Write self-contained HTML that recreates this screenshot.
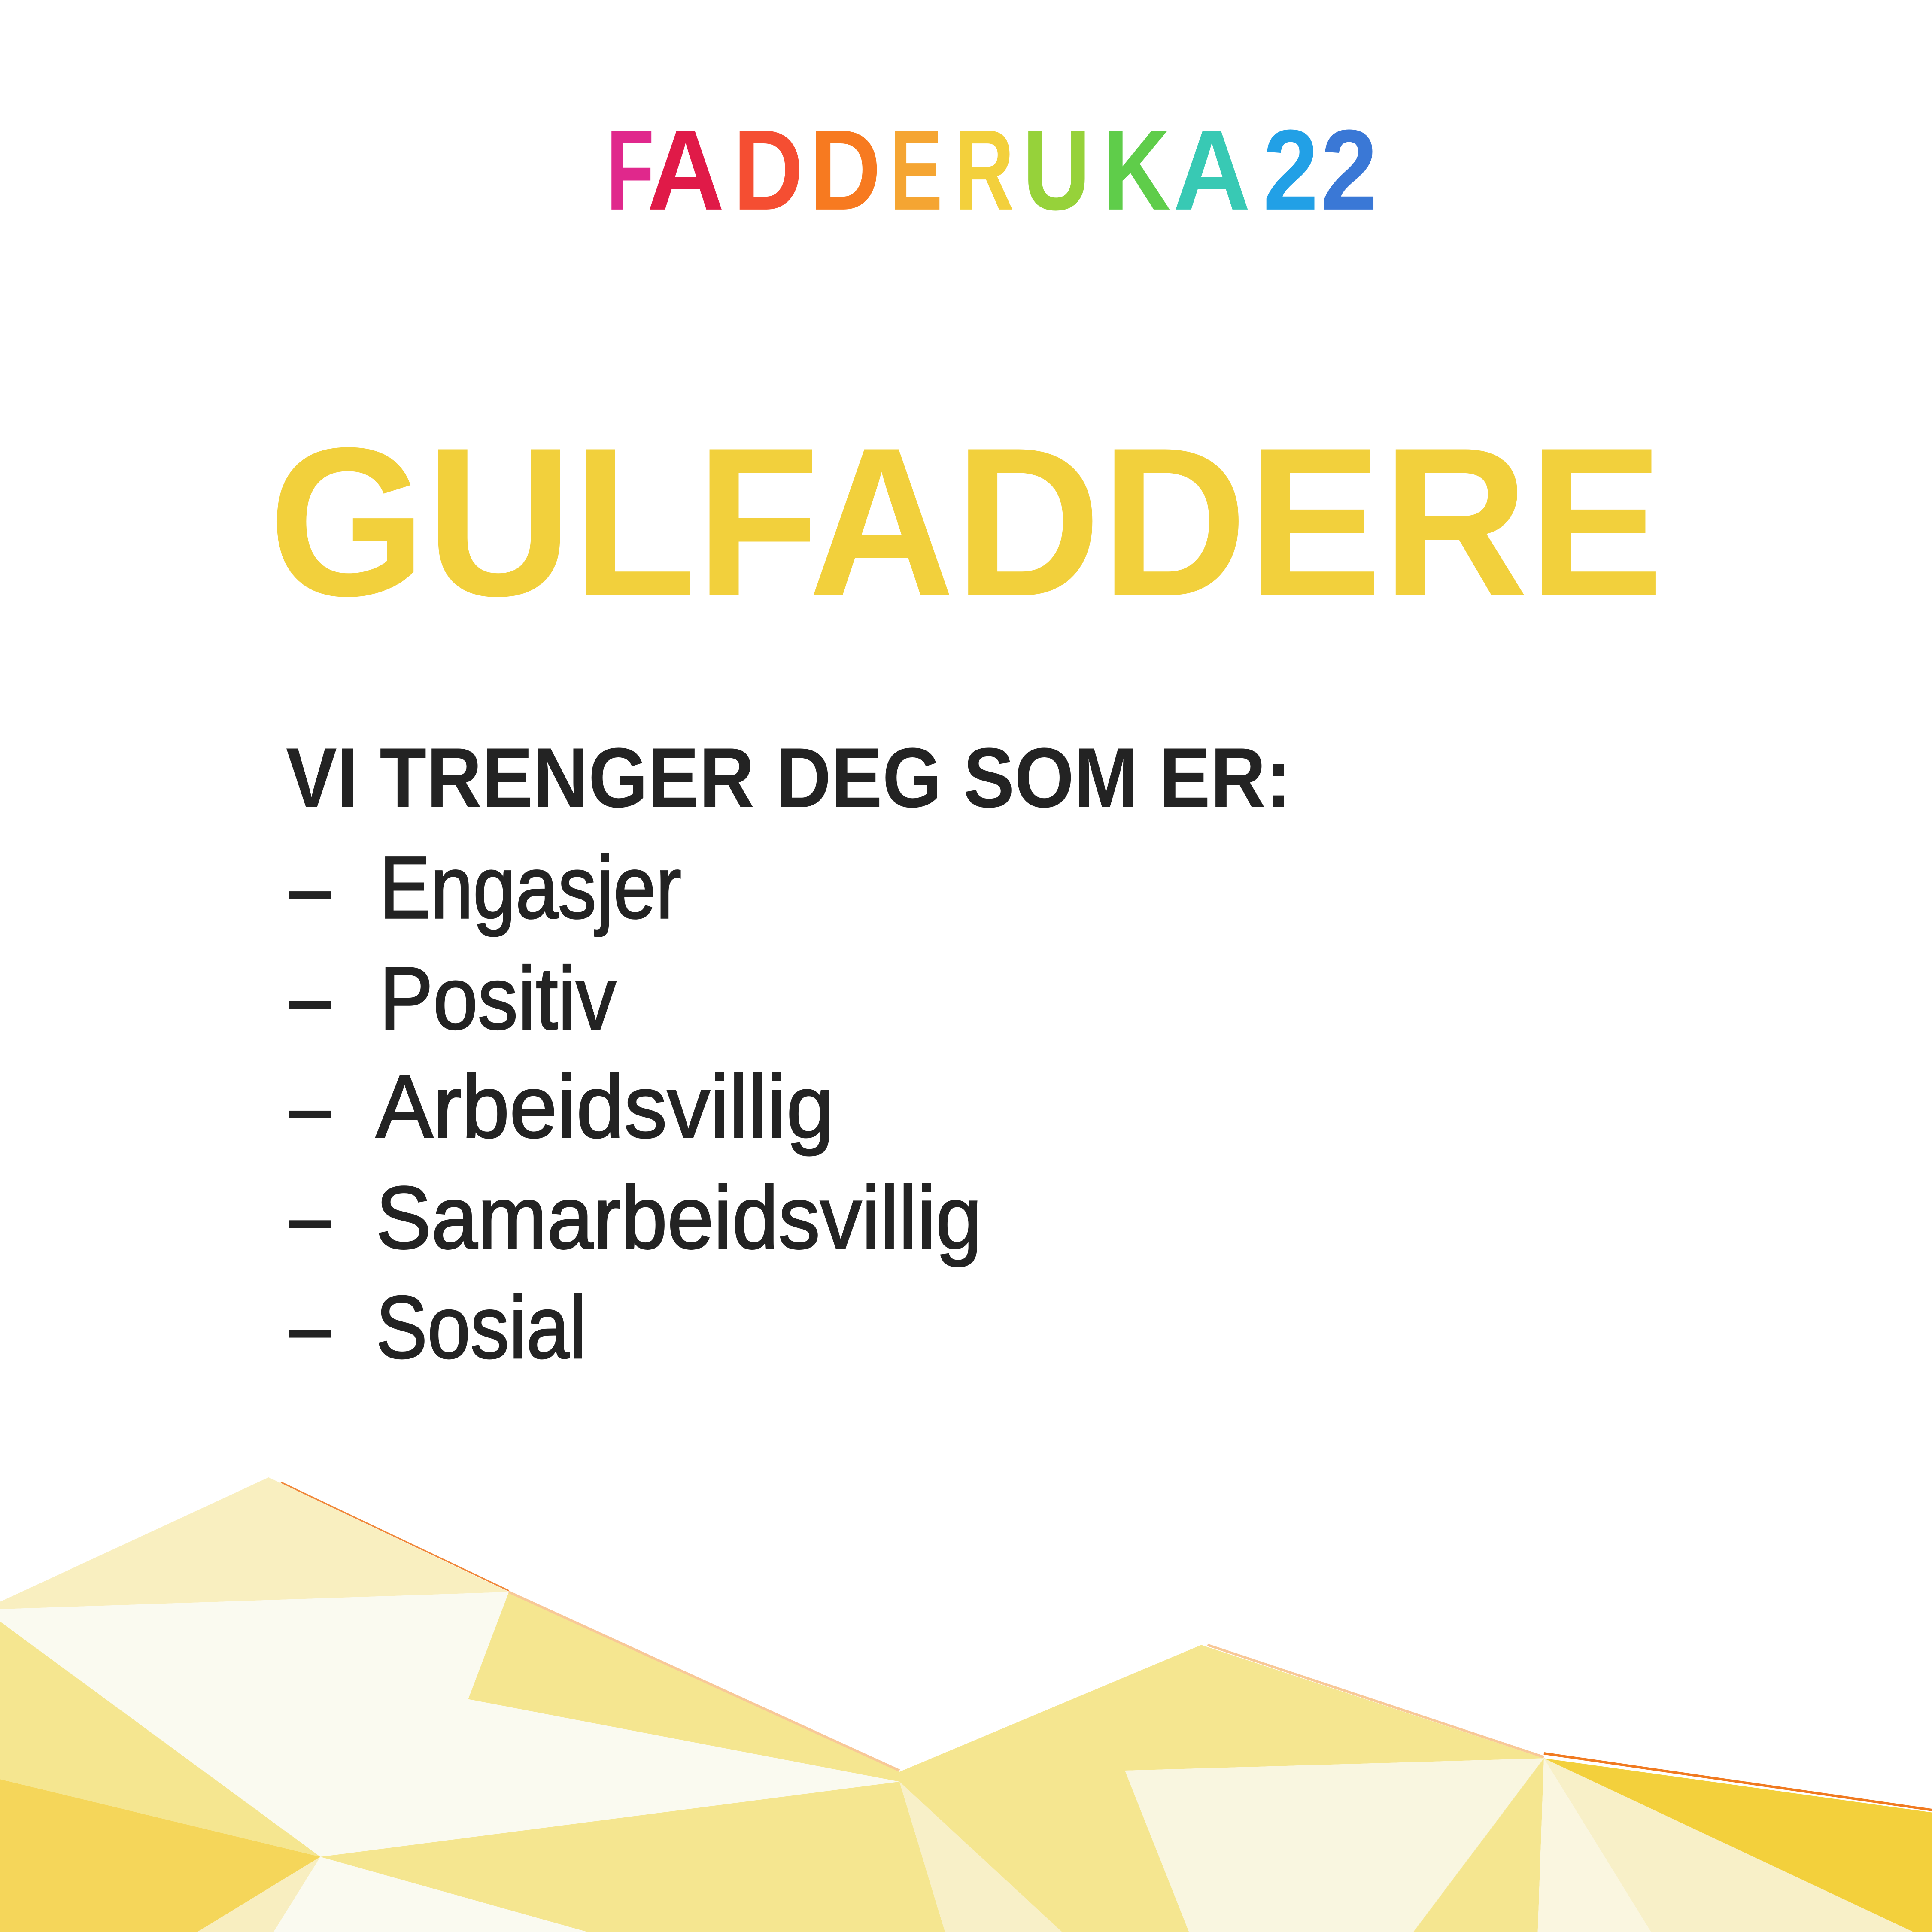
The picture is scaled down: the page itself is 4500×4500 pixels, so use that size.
<!DOCTYPE html>
<html><head><meta charset="utf-8"><style>html,body{margin:0;padding:0;background:#fff}svg{display:block}</style></head>
<body>
<svg width="4500" height="4500" viewBox="0 0 1568 1568" xmlns="http://www.w3.org/2000/svg">
<rect width="1568" height="1568" fill="#fff"/>
<g font-family="Liberation Sans, sans-serif" font-weight="bold" font-size="93">
<text x="492" y="170" fill="#e0288c" textLength="39" lengthAdjust="spacingAndGlyphs">F</text>
<text x="525" y="170" fill="#e01a48" textLength="63" lengthAdjust="spacingAndGlyphs">A</text>
<text x="595" y="170" fill="#f54e32" textLength="57" lengthAdjust="spacingAndGlyphs">D</text>
<text x="657" y="170" fill="#f77a20" textLength="58" lengthAdjust="spacingAndGlyphs">D</text>
<text x="722" y="170" fill="#f5a532" textLength="43" lengthAdjust="spacingAndGlyphs">E</text>
<text x="775" y="170" fill="#f3d03c" textLength="48" lengthAdjust="spacingAndGlyphs">R</text>
<text x="830" y="170" fill="#96d23a" textLength="55" lengthAdjust="spacingAndGlyphs">U</text>
<text x="895" y="170" fill="#5fcd4a" textLength="55" lengthAdjust="spacingAndGlyphs">K</text>
<text x="952" y="170" fill="#38c9b4" textLength="63" lengthAdjust="spacingAndGlyphs">A</text>
<text x="1025" y="170" fill="#22a0e6" textLength="45" lengthAdjust="spacingAndGlyphs">2</text>
<text x="1072" y="170" fill="#3a78d6" textLength="46" lengthAdjust="spacingAndGlyphs">2</text>
</g>
<text x="218" y="483" font-family="Liberation Sans, sans-serif" font-weight="bold" font-size="172" fill="#f2d03c" textLength="1132" lengthAdjust="spacingAndGlyphs">GULFADDERE</text>
<text x="232" y="655" font-family="Liberation Sans, sans-serif" font-weight="bold" font-size="69" fill="#232323" textLength="816" lengthAdjust="spacingAndGlyphs">VI TRENGER DEG SOM ER:</text>
<g font-family="Liberation Sans, sans-serif" font-size="72" fill="#232323" stroke="#232323" stroke-width="1.2">
<rect x="235" y="724" width="33" height="5"/>
<text x="308" y="745" textLength="245" lengthAdjust="spacingAndGlyphs">Engasjer</text>
<rect x="235" y="813" width="33" height="5"/>
<text x="308" y="835" textLength="192" lengthAdjust="spacingAndGlyphs">Positiv</text>
<rect x="235" y="902" width="33" height="5"/>
<text x="305" y="923" textLength="372" lengthAdjust="spacingAndGlyphs">Arbeidsvillig</text>
<rect x="235" y="991" width="33" height="5"/>
<text x="305" y="1013" textLength="492" lengthAdjust="spacingAndGlyphs">Samarbeidsvillig</text>
<rect x="235" y="1080" width="33" height="5"/>
<text x="305" y="1102" textLength="171" lengthAdjust="spacingAndGlyphs">Sosial</text>
</g>
<g>
<polygon fill="#f9efc0" points="0,1300 218,1199 413,1292 0,1306"/>
<polygon fill="#fafaf0" points="0,1306 413,1292 380,1379 730,1446 260,1507 0,1316"/>
<polygon fill="#f5e690" points="413,1292 730,1438 730,1446 380,1379"/>
<polygon fill="#f5e690" points="0,1316 260,1507 0,1444"/>
<polygon fill="#f5d65a" points="0,1444 260,1507 160,1568 0,1568"/>
<polygon fill="#f8eec0" points="160,1568 260,1507 222,1568"/>
<polygon fill="#fafaf0" points="222,1568 260,1507 477,1568"/>
<polygon fill="#f5e690" points="260,1507 730,1446 767,1568 477,1568"/>
<polygon fill="#f8f0c8" points="730,1446 862,1568 767,1568"/>
<polygon fill="#f5e690" points="730,1438 975,1335 1253,1427 913,1437 965,1568 862,1568 730,1446"/>
<polygon fill="#f9f6e0" points="913,1437 1253,1427 1147,1568 965,1568"/>
<polygon fill="#f5e690" points="1253,1427 1248,1568 1147,1568"/>
<polygon fill="#faf6e0" points="1253,1427 1340,1568 1248,1568"/>
<polygon fill="#f8f0c8" points="1253,1427 1553,1568 1340,1568"/>
<polygon fill="#f3d03c" points="1253,1427 1568,1471 1568,1568 1553,1568"/>
<line x1="228" y1="1203" x2="413" y2="1291" stroke="#f0883a" stroke-width="1.2"/>
<line x1="413" y1="1292" x2="730" y2="1437" stroke="#f8c898" stroke-width="2"/>
<line x1="980" y1="1335" x2="1253" y2="1426" stroke="#f8c898" stroke-width="2"/>
<line x1="1253" y1="1423" x2="1568" y2="1469" stroke="#f07a20" stroke-width="2"/>
</g>
</svg>
</body></html>
